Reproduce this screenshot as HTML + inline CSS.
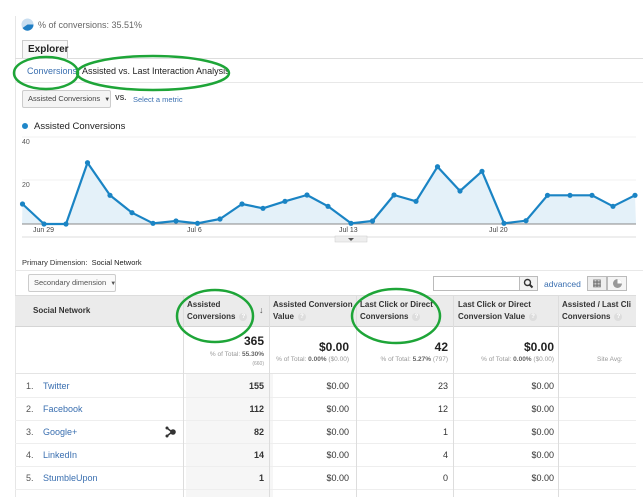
<!DOCTYPE html>
<html><head><meta charset="utf-8"><style>
*{margin:0;padding:0;box-sizing:border-box}
body{width:643px;height:497px;background:#fff;font-family:"Liberation Sans",Arial,sans-serif;font-size:9px;color:#333;position:relative;overflow:hidden}
.a{position:absolute;white-space:nowrap}
.blue{color:#3a6fb0}
.hl{position:absolute;height:1px;background:#ddd}
.vl{position:absolute;width:1px;background:#ddd}
.th{font-weight:bold;font-size:8px;line-height:12px;color:#333}
.q{display:inline-block;width:8px;height:8px;border-radius:50%;background:#ddd;color:#fff;font-size:6px;text-align:center;line-height:8px;vertical-align:middle;margin-left:4px}
.num{position:absolute;text-align:right;font-size:9px}
.sm{font-size:6.5px;color:#999}
</style></head><body>
<div class="vl" style="left:15px;top:16px;height:481px;background:#e6e6e6"></div>
<svg class="a" style="left:21px;top:18px" width="13" height="13"><circle cx="6.5" cy="6.5" r="6" fill="#c9def0"/><path d="M6.5 6.5 L12.5 6.5 A6 6 0 0 1 1.5 10 Z" fill="#1f7ec4"/></svg>
<div class="a" style="left:38px;top:20px;color:#666">% of conversions: 35.51%</div>
<div class="a" style="left:22px;top:40px;width:46px;height:19px;border:1px solid #ccc;border-bottom:none;background:#f8f8f8;font-weight:bold;font-size:10px;line-height:18px;padding-left:5px;color:#222">Explorer</div>
<div class="hl" style="left:15px;top:58px;width:628px"></div>
<div class="a blue" style="left:27px;top:66px;font-size:9px">Conversions</div>
<div class="a" style="left:82px;top:66px;font-size:9px;color:#222">Assisted vs. Last Interaction Analysis</div>
<div class="hl" style="left:15px;top:82px;width:628px;background:#e8e8e8"></div>
<div class="a" style="left:22px;top:90px;width:89px;height:18px;border:1px solid #ccc;border-radius:2px;background:#f4f4f4;font-size:7.5px;line-height:16px;padding-left:5px;color:#444">Assisted Conversions &nbsp;<span style="font-size:6px">▼</span></div>
<div class="a" style="left:115px;top:95px;font-size:7px;font-weight:bold;color:#444">VS.</div>
<div class="a blue" style="left:133px;top:95px;font-size:7.5px">Select a metric</div>
<div class="a" style="left:22px;top:123px;width:6px;height:6px;border-radius:50%;background:#1f87c9"></div>
<div class="a" style="left:34px;top:121px;font-size:9.5px;color:#222">Assisted Conversions</div>
<div class="a" style="left:22px;top:139px;font-size:7px;color:#555">40</div>
<div class="a" style="left:22px;top:182px;font-size:7px;color:#555">20</div>
<svg class="a" style="left:0;top:0" width="643" height="497">
<line x1="22" y1="137" x2="636" y2="137" stroke="#f0f0f0"/>
<line x1="22" y1="180" x2="636" y2="180" stroke="#f0f0f0"/>
<polygon fill="#e4f1f9" points="22,224 22.5,204 44,224 66,224 87.5,162.7 110,195.3 132,212.7 153,223.3 176,221 197.5,223.3 220,219 242,204 263,208.3 285,201.3 307,195 328,206.3 351,223.3 372.5,221 394,195 416,201.3 437.5,166.7 460,191 482,171.3 504,223.3 526,220.7 547.5,195.3 570,195.3 592,195.3 613,206.3 635,195.3 636,224"/>
<line x1="22" y1="224" x2="636" y2="224" stroke="#888"/>
<polyline fill="none" stroke="#1a84c4" stroke-width="2.2" stroke-linejoin="round" points="22.5,204 44,224 66,224 87.5,162.7 110,195.3 132,212.7 153,223.3 176,221 197.5,223.3 220,219 242,204 263,208.3 285,201.3 307,195 328,206.3 351,223.3 372.5,221 394,195 416,201.3 437.5,166.7 460,191 482,171.3 504,223.3 526,220.7 547.5,195.3 570,195.3 592,195.3 613,206.3 635,195.3"/>
<g fill="#1a84c4"><circle cx="22.5" cy="204" r="2.6"/><circle cx="44" cy="224" r="2.6"/><circle cx="66" cy="224" r="2.6"/><circle cx="87.5" cy="162.7" r="2.6"/><circle cx="110" cy="195.3" r="2.6"/><circle cx="132" cy="212.7" r="2.6"/><circle cx="153" cy="223.3" r="2.6"/><circle cx="176" cy="221" r="2.6"/><circle cx="197.5" cy="223.3" r="2.6"/><circle cx="220" cy="219" r="2.6"/><circle cx="242" cy="204" r="2.6"/><circle cx="263" cy="208.3" r="2.6"/><circle cx="285" cy="201.3" r="2.6"/><circle cx="307" cy="195" r="2.6"/><circle cx="328" cy="206.3" r="2.6"/><circle cx="351" cy="223.3" r="2.6"/><circle cx="372.5" cy="221" r="2.6"/><circle cx="394" cy="195" r="2.6"/><circle cx="416" cy="201.3" r="2.6"/><circle cx="437.5" cy="166.7" r="2.6"/><circle cx="460" cy="191" r="2.6"/><circle cx="482" cy="171.3" r="2.6"/><circle cx="504" cy="223.3" r="2.6"/><circle cx="526" cy="220.7" r="2.6"/><circle cx="547.5" cy="195.3" r="2.6"/><circle cx="570" cy="195.3" r="2.6"/><circle cx="592" cy="195.3" r="2.6"/><circle cx="613" cy="206.3" r="2.6"/><circle cx="635" cy="195.3" r="2.6"/></g>
<line x1="22" y1="237" x2="636" y2="237" stroke="#ddd"/>
<rect x="335" y="236" width="32" height="6" fill="#eee" stroke="#ccc" stroke-width="0.5"/>
<path d="M348 238 L354 238 L351 241 Z" fill="#555"/>
</svg>
<div class="a" style="left:33px;top:227px;font-size:7px;color:#444">Jun 29</div>
<div class="a" style="left:187px;top:227px;font-size:7px;color:#444">Jul 6</div>
<div class="a" style="left:339px;top:227px;font-size:7px;color:#444">Jul 13</div>
<div class="a" style="left:489px;top:227px;font-size:7px;color:#444">Jul 20</div>
<div class="a" style="left:22px;top:258px;font-size:7.5px;color:#333">Primary Dimension: &nbsp;<span style="color:#222">Social Network</span></div>
<div class="hl" style="left:15px;top:270px;width:628px;background:#e8e8e8"></div>
<div class="a" style="left:28px;top:274px;width:88px;height:18px;border:1px solid #ccc;border-radius:2px;background:#fafafa;font-size:7.5px;line-height:16px;padding-left:5px;color:#555">Secondary dimension &nbsp;<span style="font-size:6px">▼</span></div>
<div class="a" style="left:433px;top:276px;width:105px;height:15px;border:1px solid #bbb;background:#fff"></div>
<div class="a" style="left:519px;top:276px;width:19px;height:15px;border:1px solid #bbb;background:#f3f3f3"></div>
<svg class="a" style="left:523px;top:278px" width="11" height="11"><circle cx="4.5" cy="4.5" r="3" fill="none" stroke="#333" stroke-width="1.4"/><line x1="6.5" y1="6.5" x2="9.5" y2="9.5" stroke="#333" stroke-width="2"/></svg>
<div class="a blue" style="left:544px;top:279px;font-size:8.5px">advanced</div>
<div class="a" style="left:587px;top:276px;width:20px;height:15px;border:1px solid #bbb;background:#eee;font-size:10px;text-align:center;line-height:13px;color:#666">▦</div>
<div class="a" style="left:607px;top:276px;width:20px;height:15px;border:1px solid #bbb;background:#f5f5f5"></div>
<svg class="a" style="left:612px;top:278px" width="11" height="11"><circle cx="5.5" cy="5.5" r="4.5" fill="#999"/><path d="M5.5 5.5 L5.5 1 A4.5 4.5 0 0 1 10 5.5 Z" fill="#fff"/></svg>
<div class="a" style="left:15px;top:295px;width:621px;height:32px;background:#ebebeb;border-top:1px solid #ddd;border-bottom:1px solid #d5d5d5"></div>
<div class="a th" style="left:33px;top:305px">Social Network</div>
<div class="a th" style="left:187px;top:299px">Assisted<br>Conversions<span class="q">?</span></div>
<div class="a" style="left:259px;top:305px;font-size:9px;color:#555">↓</div>
<div class="a th" style="left:273px;top:299px">Assisted Conversion<br>Value<span class="q">?</span></div>
<div class="a th" style="left:360px;top:299px">Last Click or Direct<br>Conversions<span class="q">?</span></div>
<div class="a th" style="left:458px;top:299px">Last Click or Direct<br>Conversion Value<span class="q">?</span></div>
<div class="a th" style="left:562px;top:299px">Assisted / Last Cli<br>Conversions<span class="q">?</span></div>
<div class="num" style="left:186px;width:78px;top:334px;font-weight:bold;font-size:12px;color:#222">365</div>
<div class="num sm" style="left:186px;width:78px;top:351px">% of Total: <b style="color:#666">55.30%</b></div>
<div class="num sm" style="left:186px;width:78px;top:361px;font-size:5px">(660)</div>
<div class="num" style="left:270px;width:79px;top:340px;font-weight:bold;font-size:12px;color:#222">$0.00</div>
<div class="num sm" style="left:270px;width:79px;top:356px">% of Total: <b style="color:#666">0.00%</b> ($0.00)</div>
<div class="num" style="left:362px;width:86px;top:340px;font-weight:bold;font-size:12px;color:#222">42</div>
<div class="num sm" style="left:362px;width:86px;top:356px">% of Total: <b style="color:#666">5.27%</b> (797)</div>
<div class="num" style="left:462px;width:92px;top:340px;font-weight:bold;font-size:12px;color:#222">$0.00</div>
<div class="num sm" style="left:462px;width:92px;top:356px">% of Total: <b style="color:#666">0.00%</b> ($0.00)</div>
<div class="a sm" style="left:597px;top:356px">Site Avg:</div>
<div class="hl" style="left:15px;top:373px;width:621px;background:#e4e4e4"></div>
<div class="a" style="left:186px;top:374px;width:87px;height:123px;background:#f6f6f6"></div>
<div class="hl" style="left:15px;top:397px;width:621px;background:#eee"></div>
<div class="hl" style="left:15px;top:420px;width:621px;background:#eee"></div>
<div class="hl" style="left:15px;top:443px;width:621px;background:#eee"></div>
<div class="hl" style="left:15px;top:466px;width:621px;background:#eee"></div>
<div class="hl" style="left:15px;top:489px;width:621px;background:#eee"></div>
<div class="vl" style="left:183px;top:295px;height:202px"></div>
<div class="vl" style="left:269px;top:295px;height:202px"></div>
<div class="vl" style="left:356px;top:295px;height:202px"></div>
<div class="vl" style="left:453px;top:295px;height:202px"></div>
<div class="vl" style="left:558px;top:295px;height:202px"></div>
<div class="a" style="left:26px;top:381px;color:#555">1.</div><div class="a blue" style="left:43px;top:381px">Twitter</div>
<div class="a" style="left:26px;top:404px;color:#555">2.</div><div class="a blue" style="left:43px;top:404px">Facebook</div>
<div class="a" style="left:26px;top:427px;color:#555">3.</div><div class="a blue" style="left:43px;top:427px">Google+</div>
<div class="a" style="left:26px;top:450px;color:#555">4.</div><div class="a blue" style="left:43px;top:450px">LinkedIn</div>
<div class="a" style="left:26px;top:473px;color:#555">5.</div><div class="a blue" style="left:43px;top:473px">StumbleUpon</div>
<svg class="a" style="left:165px;top:426px" width="12" height="12"><path d="M2 2 L7 6 L2 10" fill="none" stroke="#333" stroke-width="1.5"/><circle cx="2" cy="2" r="1.5" fill="#333"/><circle cx="2" cy="10" r="1.5" fill="#333"/><circle cx="8" cy="6" r="2.8" fill="#333"/></svg>
<div class="num" style="left:186px;width:78px;top:381px;font-weight:bold">155</div>
<div class="num" style="left:186px;width:78px;top:404px;font-weight:bold">112</div>
<div class="num" style="left:186px;width:78px;top:427px;font-weight:bold">82</div>
<div class="num" style="left:186px;width:78px;top:450px;font-weight:bold">14</div>
<div class="num" style="left:186px;width:78px;top:473px;font-weight:bold">1</div>
<div class="num" style="left:270px;width:79px;top:381px">$0.00</div>
<div class="num" style="left:270px;width:79px;top:404px">$0.00</div>
<div class="num" style="left:270px;width:79px;top:427px">$0.00</div>
<div class="num" style="left:270px;width:79px;top:450px">$0.00</div>
<div class="num" style="left:270px;width:79px;top:473px">$0.00</div>
<div class="num" style="left:362px;width:86px;top:381px">23</div>
<div class="num" style="left:362px;width:86px;top:404px">12</div>
<div class="num" style="left:362px;width:86px;top:427px">1</div>
<div class="num" style="left:362px;width:86px;top:450px">4</div>
<div class="num" style="left:362px;width:86px;top:473px">0</div>
<div class="num" style="left:462px;width:92px;top:381px">$0.00</div>
<div class="num" style="left:462px;width:92px;top:404px">$0.00</div>
<div class="num" style="left:462px;width:92px;top:427px">$0.00</div>
<div class="num" style="left:462px;width:92px;top:450px">$0.00</div>
<div class="num" style="left:462px;width:92px;top:473px">$0.00</div>
<svg class="a" style="left:0;top:0" width="643" height="497">
<g fill="none" stroke="#1ea538" stroke-width="2.5">
<ellipse cx="46" cy="73" rx="32" ry="16"/>
<ellipse cx="153" cy="73" rx="76" ry="17"/>
<ellipse cx="215" cy="316" rx="38" ry="26"/>
<ellipse cx="396" cy="316" rx="44" ry="27"/>
</g></svg>
</body></html>
